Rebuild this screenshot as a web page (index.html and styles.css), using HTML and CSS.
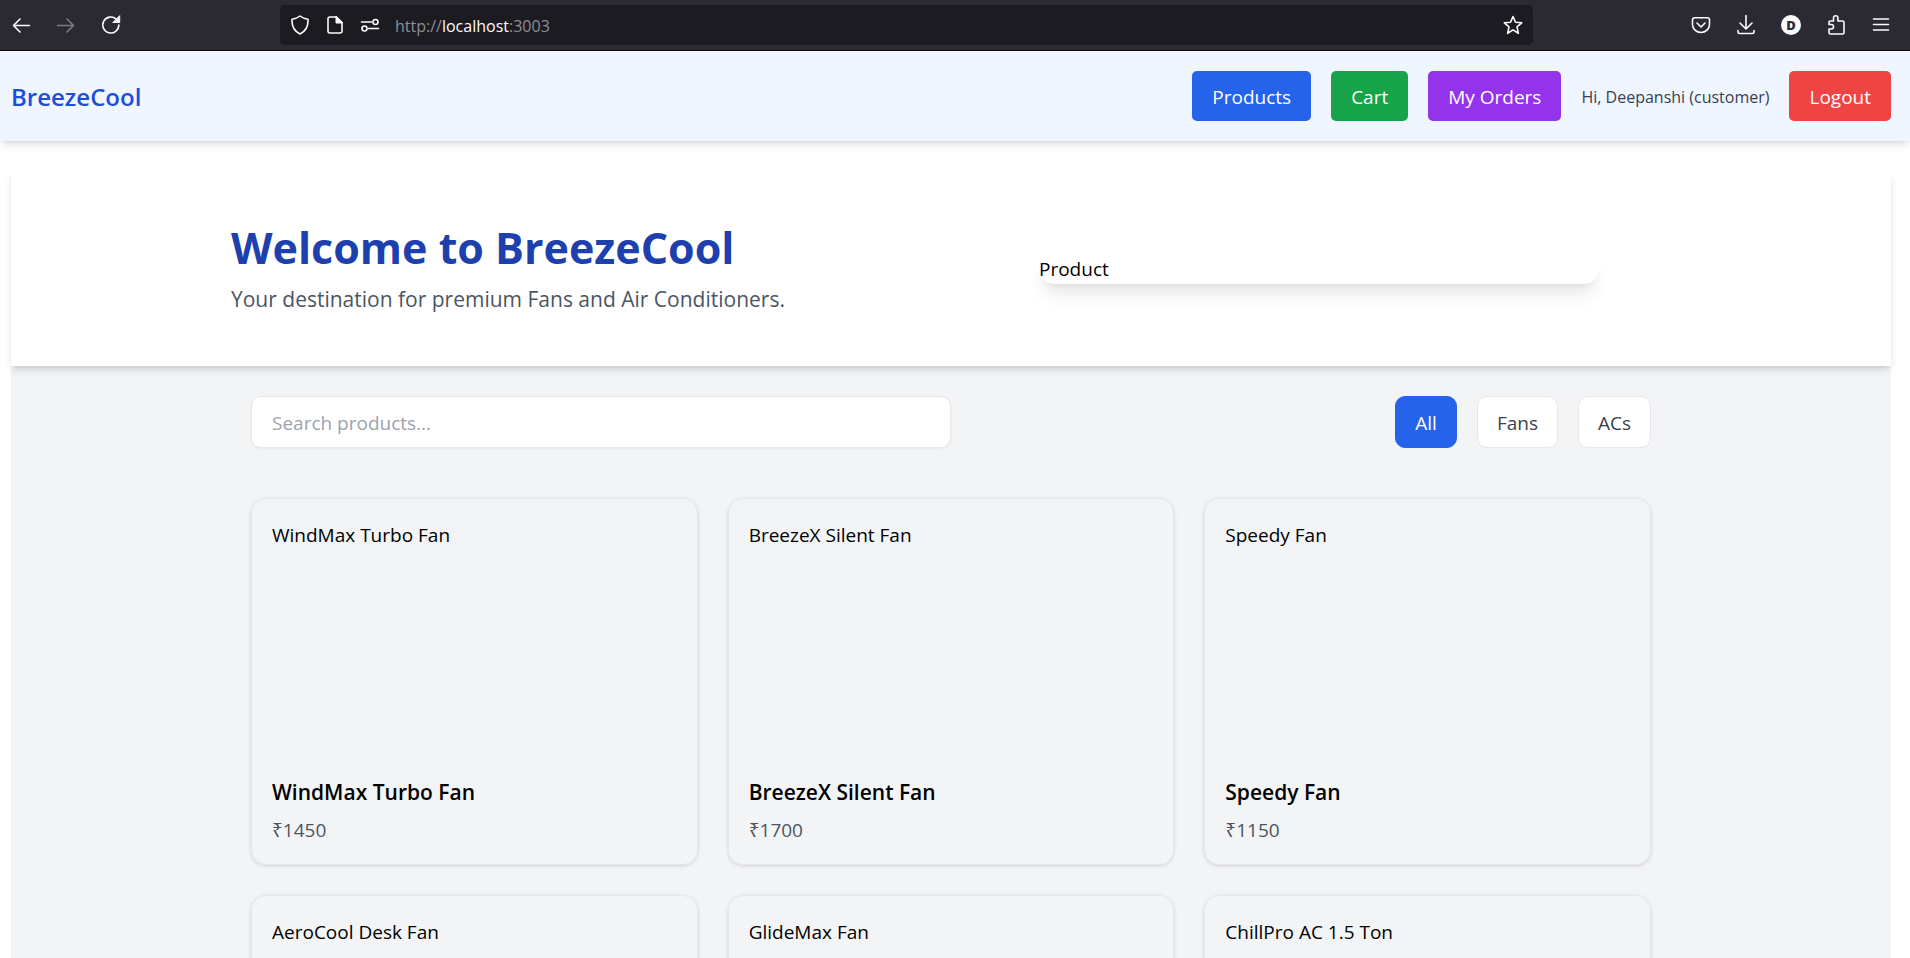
FILE: index.html
```html
<!DOCTYPE html>
<html lang="en">
<head>
<meta charset="utf-8">
<meta name="viewport" content="width=device-width, initial-scale=1">
<title>BreezeCool</title>
<link rel="stylesheet" href="styles.css">
</head>
<body>
<div class="window">
  <div class="toolbar">
    <div class="toolbar-group toolbar-start">
      <button class="tool" aria-label="Back"><svg class="icon" viewBox="0 0 20 20"><path d="M18.500 10.500H2.500M9 4L2.500 10.500 9 17"/></svg></button>
      <button class="tool tool-disabled" aria-label="Forward" disabled><svg class="icon" viewBox="0 0 20 20"><path d="M1.500 10.500h16M11 4l6.500 6.500L11 17"/></svg></button>
      <button class="tool" aria-label="Reload"><svg class="icon" viewBox="0 0 20 20"><path d="M17.800 10a8 8 0 1 1-2.600-5.900"/><path class="fill" d="M18.700 1v6.500h-6.500z"/></svg></button>
    </div>
    <div class="address">
      <button class="tool" aria-label="Tracking protection"><svg class="icon" viewBox="0 0 20 20"><path d="M10 1C7.500 3 4.800 3.800 2 4.200c-.4 6.800 2.200 12 8 14.800 5.800-2.800 8.400-8 8-14.800C15.200 3.800 12.500 3 10 1z"/></svg></button>
      <button class="tool" aria-label="Site information"><svg class="icon" viewBox="0 0 20 20"><path d="M5 2h6.500L17 7.500V16a2 2 0 0 1-2 2H5a2 2 0 0 1-2-2V4a2 2 0 0 1 2-2z"/><path class="fill" d="M11 1.500V8h6.500z"/></svg></button>
      <button class="tool" aria-label="Permissions"><svg class="icon" viewBox="0 0 20 20"><path d="M1.500 7h10M8.500 13.500h10"/><circle cx="15.500" cy="7" r="2.500"/><circle cx="4.500" cy="13.500" r="2.500"/></svg></button>
      <div class="url" role="textbox" aria-label="Address"><span>http://</span><span class="url-host">localhost</span><span>:3003</span></div>
      <button class="tool" aria-label="Bookmark this page"><svg class="icon" viewBox="0 0 20 20"><path d="M10 1.500l2.500 5.700 6.200.6-4.700 4.100 1.400 6.400-5.400-3.400-5.400 3.400L6 11.900 1.300 7.800l6.200-.6z"/></svg></button>
    </div>
    <div class="toolbar-group toolbar-end">
      <button class="tool" aria-label="Save to Pocket"><svg class="icon" viewBox="0 0 20 20"><path d="M3.500 2.800h13a2 2 0 0 1 2 2v4.700a8.500 8 0 0 1-17 0V4.800a2 2 0 0 1 2-2z"/><path d="M6 8l4 4 4-4"/></svg></button>
      <button class="tool" aria-label="Downloads"><svg class="icon" viewBox="0 0 20 20"><path d="M10 .5v13M4 8l6 6 6-6M2 15.500V17a1.500 1.500 0 0 0 1.500 1.500h13A1.500 1.500 0 0 0 18 17v-1.500"/></svg></button>
      <button class="tool avatar" aria-label="Account">D</button>
      <button class="tool" aria-label="Extensions"><svg class="icon" viewBox="0 0 20 20"><path d="M7.500 6V3a2.200 2.200 0 0 1 4.400 0v3h4.600a1.500 1.500 0 0 1 1.500 1.500v10A1.500 1.500 0 0 1 16.500 19h-12A1.500 1.500 0 0 1 3 17.500V14h2.300a2 2 0 0 0 0-4.500H3V7.500A1.500 1.500 0 0 1 4.500 6z"/></svg></button>
      <button class="tool" aria-label="Menu"><svg class="icon" viewBox="0 0 20 20"><path d="M2.500 4h15M2.500 9.500h15M2.500 15h15"/></svg></button>
    </div>
  </div>

  <div class="page">
    <nav class="nav">
      <a class="brand" href="#">BreezeCool</a>
      <div class="nav-items">
        <a class="btn btn-blue" href="#products">Products</a>
        <a class="btn btn-green" href="#cart">Cart</a>
        <a class="btn btn-purple" href="#orders">My Orders</a>
        <span class="greeting">Hi, Deepanshi (customer)</span>
        <button class="btn btn-red">Logout</button>
      </div>
    </nav>

    <main class="main">
      <header class="hero">
        <div class="hero-inner">
          <div>
            <h1 class="hero-title">Welcome to BreezeCool</h1>
            <p class="hero-text">Your destination for premium Fans and Air Conditioners.</p>
          </div>
          <div class="hero-image">Product</div>
        </div>
      </header>

      <section class="catalog" id="products">
        <div class="controls">
          <input class="search" type="text" placeholder="Search products..." aria-label="Search products">
          <div class="filters">
            <button class="filter filter-active">All</button>
            <button class="filter">Fans</button>
            <button class="filter">ACs</button>
          </div>
        </div>
        <div class="grid">
          <article class="card"><div class="card-image">WindMax Turbo Fan</div><h2 class="card-title">WindMax Turbo Fan</h2><p class="card-price">₹1450</p></article>
          <article class="card"><div class="card-image">BreezeX Silent Fan</div><h2 class="card-title">BreezeX Silent Fan</h2><p class="card-price">₹1700</p></article>
          <article class="card"><div class="card-image">Speedy Fan</div><h2 class="card-title">Speedy Fan</h2><p class="card-price">₹1150</p></article>
          <article class="card"><div class="card-image">AeroCool Desk Fan</div></article>
          <article class="card"><div class="card-image">GlideMax Fan</div></article>
          <article class="card"><div class="card-image">ChillPro AC 1.5 Ton</div></article>
        </div>
      </section>
    </main>
  </div>
</div>
</body>
</html>
```

FILE: styles.css
```css
* {
  box-sizing: border-box;
}

body,
h1,
h2,
p {
  margin: 0;
}

body {
  font-family: "Open Sans", "Noto Sans", sans-serif;
  font-size: 19px;
  line-height: 30px;
  color: #000;
  background: #fff;
}

button,
input {
  font: inherit;
}

a {
  text-decoration: none;
}

.window {
  display: flex;
  flex-direction: column;
  height: 100vh;
}

/* Browser toolbar */
.toolbar {
  display: flex;
  flex: none;
  align-items: center;
  padding: 5px 0;
  background: #2b2a33;
  border-bottom: 1px solid #0c0c0d;
}

.toolbar-group {
  display: flex;
  align-items: center;
  gap: 25px;
}

.toolbar-start {
  width: 280px;
  padding-left: 11px;
}

.toolbar-end {
  justify-content: flex-end;
  width: 377px;
  padding-right: 19px;
}

.tool {
  display: flex;
  flex: none;
  align-items: center;
  justify-content: center;
  width: 20px;
  height: 20px;
  padding: 0;
  color: #fbfbfe;
  background: none;
  border: 0;
}

.tool-disabled {
  color: #7b7a81;
}

.icon {
  width: 20px;
  height: 20px;
  fill: none;
  stroke: currentColor;
  stroke-width: 1.6;
  stroke-linecap: round;
  stroke-linejoin: round;
}

.icon .fill {
  fill: currentColor;
  stroke-width: 1;
}

.avatar {
  font-size: 13px;
  font-weight: 800;
  line-height: 20px;
  color: #2b2a33;
  background: #fbfbfe;
  border-radius: 50%;
}

.address {
  display: flex;
  flex: 1;
  align-items: center;
  gap: 15px;
  height: 40px;
  padding: 0 10px;
  background: #1c1b22;
  border-radius: 5px;
}

.url {
  flex: 1;
  padding-top: 2px;
  font-size: 16px;
  line-height: 24px;
  color: #8f8f94;
}

.url-host {
  color: #fbfbfe;
}

/* Page */
.page {
  display: flex;
  flex: 1;
  flex-direction: column;
  min-height: 0;
  overflow: hidden;
}

.nav {
  display: flex;
  flex: none;
  align-items: center;
  justify-content: space-between;
  padding: 20px 19px 20px 11px;
  background: #eff6ff;
  box-shadow: 0 5px 8px -1px rgb(0 0 0 / 10%), 0 3px 5px -3px rgb(0 0 0 / 10%);
}

.brand {
  padding-top: 2px;
  font-size: 24px;
  font-weight: 600;
  color: #1d4ed8;
}

.nav-items {
  display: flex;
  align-items: center;
  gap: 20px;
}

.btn {
  padding: 11px 20px 9px;
  color: #fff;
  border: 0;
  border-radius: 5px;
}

.btn-blue {
  background: #2563eb;
}

.btn-green {
  background: #16a34a;
}

.btn-purple {
  background: #9333ea;
}

.btn-red {
  background: #ef4444;
}

.greeting {
  padding-top: 2px;
  font-size: 16px;
  color: #374151;
}

.main {
  flex: 1;
  min-height: 0;
  margin: 30px 19px 0 11px;
  background: #f3f4f6;
}

.hero {
  padding: 50px 20px;
  background: #fff;
  box-shadow: 0 5px 8px -1px rgb(0 0 0 / 12%), 0 3px 5px -3px rgb(0 0 0 / 12%);
}

.hero-inner {
  display: grid;
  grid-template-columns: 1fr 1fr;
  gap: 32px;
  align-items: center;
  max-width: 1440px;
  margin: 0 auto;
}

.hero-title {
  padding-top: 2px;
  margin-bottom: 9px;
  font-size: 43px;
  font-weight: 700;
  line-height: 50px;
  color: #1e40af;
}

.hero-text {
  font-size: 21px;
  line-height: 34px;
  color: #4b5563;
}

.hero-image {
  justify-self: center;
  width: 100%;
  max-width: 560px;
  border-radius: 15px;
  box-shadow: 0 13px 19px -4px rgb(0 0 0 / 10%), 0 5px 8px -5px rgb(0 0 0 / 10%);
}

.catalog {
  max-width: 1440px;
  margin: 0 auto;
  padding: 30px 20px;
}

.controls {
  display: flex;
  align-items: center;
  justify-content: space-between;
  margin-bottom: 50px;
}

.search {
  width: 50%;
  padding: 11px 20px 9px;
  background: #fff;
  border: 1px solid #e5e7eb;
  border-radius: 10px;
  box-shadow: 0 1px 3px rgb(0 0 0 / 5%);
}

.search::placeholder {
  color: #9ca3af;
}

.filters {
  display: flex;
  gap: 20px;
}

.filter {
  padding: 11px 19px 9px;
  color: #374151;
  background: #fff;
  border: 1px solid #e5e7eb;
  border-radius: 10px;
}

.filter-active {
  color: #fff;
  background: #2563eb;
  border-color: #2563eb;
}

.grid {
  display: grid;
  grid-template-columns: repeat(3, 1fr);
  gap: 30px;
}

.card {
  padding: 21px 20px 19px;
  border: 1px solid #e5e7eb;
  border-radius: 15px;
  box-shadow: 0 1px 4px rgb(0 0 0 / 10%), 0 1px 3px -1px rgb(0 0 0 / 10%);
}

.card-image {
  height: 240px;
  margin-bottom: 15px;
}

.card-title {
  margin-bottom: 5px;
  font-size: 21px;
  font-weight: 600;
  line-height: 35px;
}

.card-price {
  color: #4b5563;
}
```
